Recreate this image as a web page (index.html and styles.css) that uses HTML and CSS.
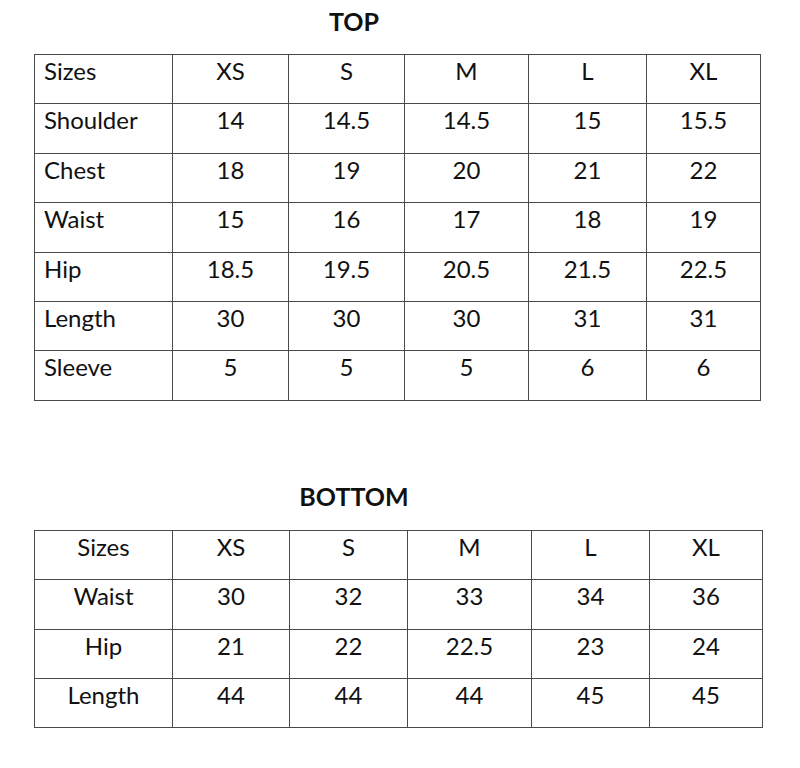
FILE: index.html
```html
<!DOCTYPE html>
<html>
<head>
<meta charset="utf-8">
<link rel="stylesheet" href="styles.css">
</head>
<body>
<div class="page">
  <h1 class="title title-top">TOP</h1>
  <table class="chart chart-top">
    <colgroup>
      <col class="c0"><col class="c1"><col class="c2"><col class="c3"><col class="c4"><col class="c5">
    </colgroup>
    <tr><td class="label">Sizes</td><td>XS</td><td>S</td><td>M</td><td>L</td><td>XL</td></tr>
    <tr><td class="label">Shoulder</td><td>14</td><td>14.5</td><td>14.5</td><td>15</td><td>15.5</td></tr>
    <tr><td class="label">Chest</td><td>18</td><td>19</td><td>20</td><td>21</td><td>22</td></tr>
    <tr><td class="label">Waist</td><td>15</td><td>16</td><td>17</td><td>18</td><td>19</td></tr>
    <tr><td class="label">Hip</td><td>18.5</td><td>19.5</td><td>20.5</td><td>21.5</td><td>22.5</td></tr>
    <tr><td class="label">Length</td><td>30</td><td>30</td><td>30</td><td>31</td><td>31</td></tr>
    <tr><td class="label">Sleeve</td><td>5</td><td>5</td><td>5</td><td>6</td><td>6</td></tr>
  </table>

  <h1 class="title title-bottom">BOTTOM</h1>
  <table class="chart chart-bottom">
    <colgroup>
      <col class="b0"><col class="b1"><col class="b2"><col class="b3"><col class="b4"><col class="b5">
    </colgroup>
    <tr><td>Sizes</td><td>XS</td><td>S</td><td>M</td><td>L</td><td>XL</td></tr>
    <tr><td>Waist</td><td>30</td><td>32</td><td>33</td><td>34</td><td>36</td></tr>
    <tr><td>Hip</td><td>21</td><td>22</td><td>22.5</td><td>23</td><td>24</td></tr>
    <tr><td>Length</td><td>44</td><td>44</td><td>44</td><td>45</td><td>45</td></tr>
  </table>
</div>
</body>
</html>
```

FILE: styles.css
```css
html, body {
  margin: 0;
  padding: 0;
  background: #ffffff;
}

body {
  font-family: "Lato", "Open Sans", sans-serif;
  color: #111111;
}

.page {
  width: 800px;
  padding-left: 34px;
  box-sizing: border-box;
}

.title {
  margin: 0;
  width: 640px;
  text-align: center;
  font-size: 25px;
  font-weight: 700;
  line-height: 30px;
}

.title-top {
  padding-top: 6px;
  padding-bottom: 18px;
}

.title-bottom {
  padding-top: 80px;
  padding-bottom: 19px;
}

.chart {
  border-collapse: collapse;
  table-layout: fixed;
  font-size: 24px;
}

.chart td {
  border: 1px solid #4a4a4a;
  height: 49.4px;
  box-sizing: border-box;
  padding: 1px 0 0 0;
  vertical-align: top;
  text-align: center;
  line-height: 30px;
}

.chart td.label {
  text-align: left;
  padding-left: 9px;
}

.c0 { width: 138px; }
.c1 { width: 116px; }
.c2 { width: 116px; }
.c3 { width: 124px; }
.c4 { width: 118px; }
.c5 { width: 114px; }

.b0 { width: 138px; }
.b1 { width: 117px; }
.b2 { width: 118px; }
.b3 { width: 124px; }
.b4 { width: 118px; }
.b5 { width: 113px; }
```
